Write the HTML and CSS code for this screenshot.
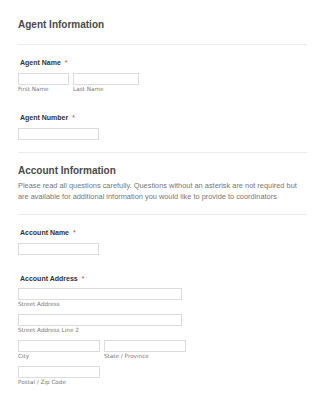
FILE: index.html
```html
<!DOCTYPE html>
<html>
<head>
<meta charset="utf-8">
<link rel="stylesheet" href="styles.css">
</head>
<body>
<div class="form">
  <div class="section-head first">
    <h2 class="title">Agent Information</h2>
  </div>

  <div class="field top">
    <div class="label">Agent Name <span class="req">*</span></div>
    <div class="row">
      <div class="sub"><div class="box w-first"></div><div class="hint">First Name</div></div>
      <div class="sub"><div class="box w-last"></div><div class="hint">Last Name</div></div>
    </div>
  </div>

  <div class="field">
    <div class="label">Agent Number <span class="req">*</span></div>
    <div class="box w-short"></div>
  </div>

  <div class="section-head second">
    <h2 class="title">Account Information</h2>
    <p class="desc">Please read all questions carefully. Questions without an asterisk are not required but are available for additional information you would like to provide to coordinators</p>
  </div>

  <div class="field top">
    <div class="label">Account Name <span class="req">*</span></div>
    <div class="box w-short"></div>
  </div>

  <div class="field address">
    <div class="label">Account Address <span class="req">*</span></div>
    <div class="sub"><div class="box w-street"></div><div class="hint">Street Address</div></div>
    <div class="sub gap"><div class="box w-street"></div><div class="hint">Street Address Line 2</div></div>
    <div class="row gap">
      <div class="sub"><div class="box w-city"></div><div class="hint">City</div></div>
      <div class="sub"><div class="box w-state"></div><div class="hint">State / Province</div></div>
    </div>
    <div class="sub gap"><div class="box w-city"></div><div class="hint">Postal / Zip Code</div></div>
  </div>
</div>
</body>
</html>
```
FILE: styles.css
```css
html, body {
  margin: 0;
  padding: 0;
  background: #ffffff;
}
body {
  font-family: "Liberation Sans", Arial, sans-serif;
  color: #444;
}
.form {
  padding: 0 18px;
}
.section-head {
  border-bottom: 1px solid #ececec;
}
.section-head.first {
  padding: 19px 0 13px;
}
.section-head.second {
  margin-top: 12px;
  padding: 12px 0 12px;
  border-top: 1px solid #ececec;
}
.title {
  margin: 0;
  font-size: 10px;
  line-height: 12px;
  font-weight: bold;
  color: #4a4a4a;
}
.desc {
  margin: 3px 0 0;
  font-size: 7.4px;
  line-height: 11px;
  color: #777;
}
.field {
  margin-top: 20px;
}
.field.top {
  margin-top: 13px;
}
.field.address {
  margin-top: 19px;
}
.label {
  padding-left: 2px;
  font-size: 7px;
  line-height: 9px;
  font-weight: bold;
  color: #333;
  margin-bottom: 6px;
}
.field.address .label {
  margin-bottom: 5px;
}
.req {
  color: #e53935;
  font-weight: normal;
  margin-left: 2px;
}
.row {
  display: flex;
  gap: 4px;
}
.row.gap,
.sub.gap {
  margin-top: 6px;
}
.box {
  height: 10px;
  border: 1px solid #dcdcdc;
  background: #fff;
  box-sizing: content-box;
}
.hint {
  font-family: "DejaVu Sans", Verdana, sans-serif;
  font-size: 5.7px;
  line-height: 8px;
  color: #7a7a7a;
}
.w-first { width: 49px; }
.w-last { width: 64px; }
.w-short { width: 79px; }
.w-street { width: 162px; }
.w-city { width: 80px; }
.w-state { width: 80px; }
```
